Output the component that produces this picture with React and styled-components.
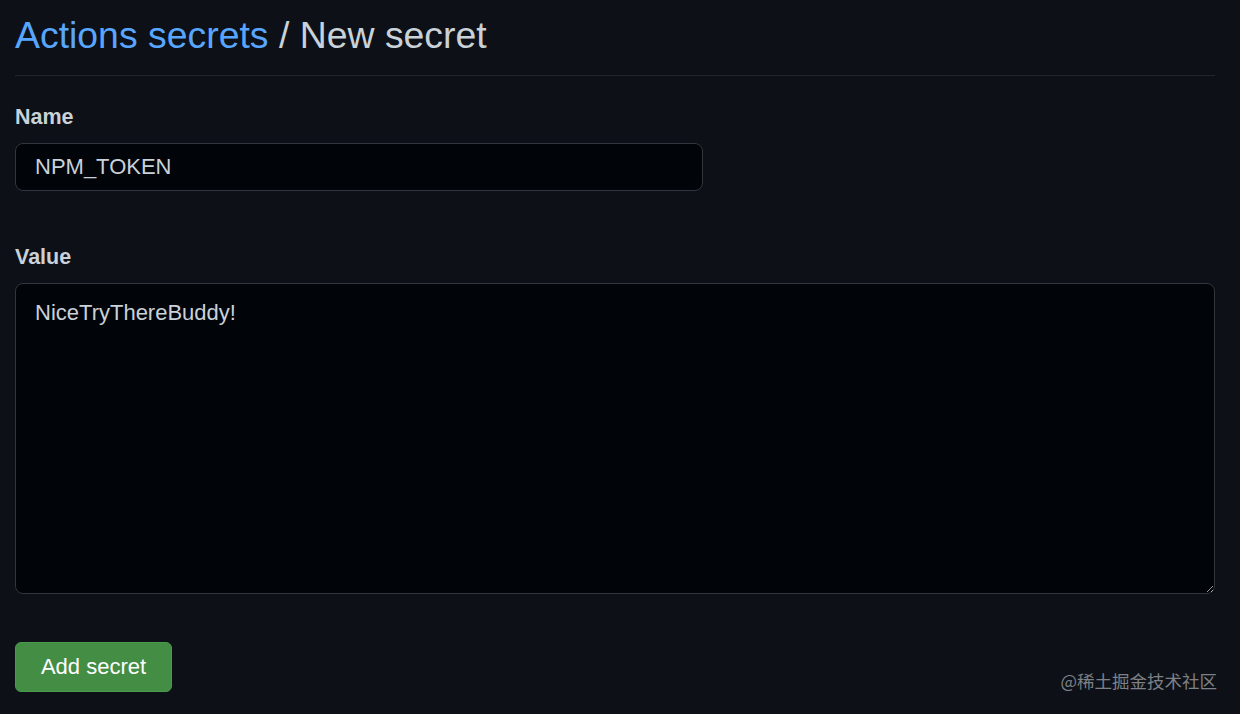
import React from "react";
import styled, { createGlobalStyle } from "styled-components";

const Global = createGlobalStyle`
  html, body { margin: 0; padding: 0; background: #0d1117; color-scheme: dark; }
  body { font-family: "Liberation Sans", Arial, sans-serif; }
`;

const Page = styled.div`
  position: relative;
  width: 1240px;
  height: 714px;
  box-sizing: border-box;
  padding: 12px 25px 0 15px;
  background: #0d1117;
  overflow: hidden;
`;

const Header = styled.div`
  border-bottom: 1px solid #21262d;
  padding-bottom: 17px;
`;

const Title = styled.h1`
  margin: 0;
  font-size: 37.4px;
  line-height: 46px;
  font-weight: 400;
  color: #c9d1d9;
`;

const Crumb = styled.a`
  color: #58a6ff;
  text-decoration: none;
`;

const Form = styled.form`
  display: flex;
  flex-direction: column;
  padding-top: 26px;
`;

const Field = styled.div`
  display: flex;
  flex-direction: column;
  gap: 11px;
  margin-bottom: ${(p) => p.$mb}px;
`;

const Label = styled.label`
  font-size: 21.5px;
  line-height: 30px;
  font-weight: 700;
  color: #c9d1d9;
`;

const Input = styled.input`
  box-sizing: border-box;
  width: 688px;
  height: 48px;
  padding: 0 19px;
  font-family: inherit;
  font-size: 22px;
  color: #c9d1d9;
  background: #010409;
  border: 1px solid #30363d;
  border-radius: 8px;
  outline: none;
`;

const TextArea = styled.textarea`
  box-sizing: border-box;
  width: 1200px;
  height: 311px;
  padding: 14px 19px;
  font-family: inherit;
  font-size: 22px;
  line-height: 30px;
  color: #c9d1d9;
  background: #010409;
  border: 1px solid #30363d;
  border-radius: 8px;
  outline: none;
  resize: vertical;
`;

const Button = styled.button`
  align-self: flex-start;
  box-sizing: border-box;
  width: 157px;
  height: 50px;
  padding: 0;
  font-family: inherit;
  font-size: 22px;
  font-weight: 500;
  color: #ffffff;
  background: #438d45;
  border: 1px solid #4a9a4c;
  border-radius: 6px;
  cursor: pointer;
`;

const Watermark = styled.div`
  position: absolute;
  right: 23px;
  top: 668px;
  font-family: "Noto Sans CJK SC", "Noto Sans", sans-serif;
  font-size: 17.5px;
  line-height: 26px;
  color: #7d8086;
`;

export default function App() {
  return (
    <Page>
      <Global />
      <Header>
        <Title>
          <Crumb href="#">Actions secrets</Crumb> / New secret
        </Title>
      </Header>
      <Form onSubmit={(e) => e.preventDefault()}>
        <Field $mb={51}>
          <Label htmlFor="name">Name</Label>
          <Input id="name" defaultValue="NPM_TOKEN" />
        </Field>
        <Field $mb={48}>
          <Label htmlFor="value">Value</Label>
          <TextArea id="value" defaultValue="NiceTryThereBuddy!" />
        </Field>
        <Button type="submit">Add secret</Button>
      </Form>
      <Watermark>@稀土掘金技术社区</Watermark>
    </Page>
  );
}
